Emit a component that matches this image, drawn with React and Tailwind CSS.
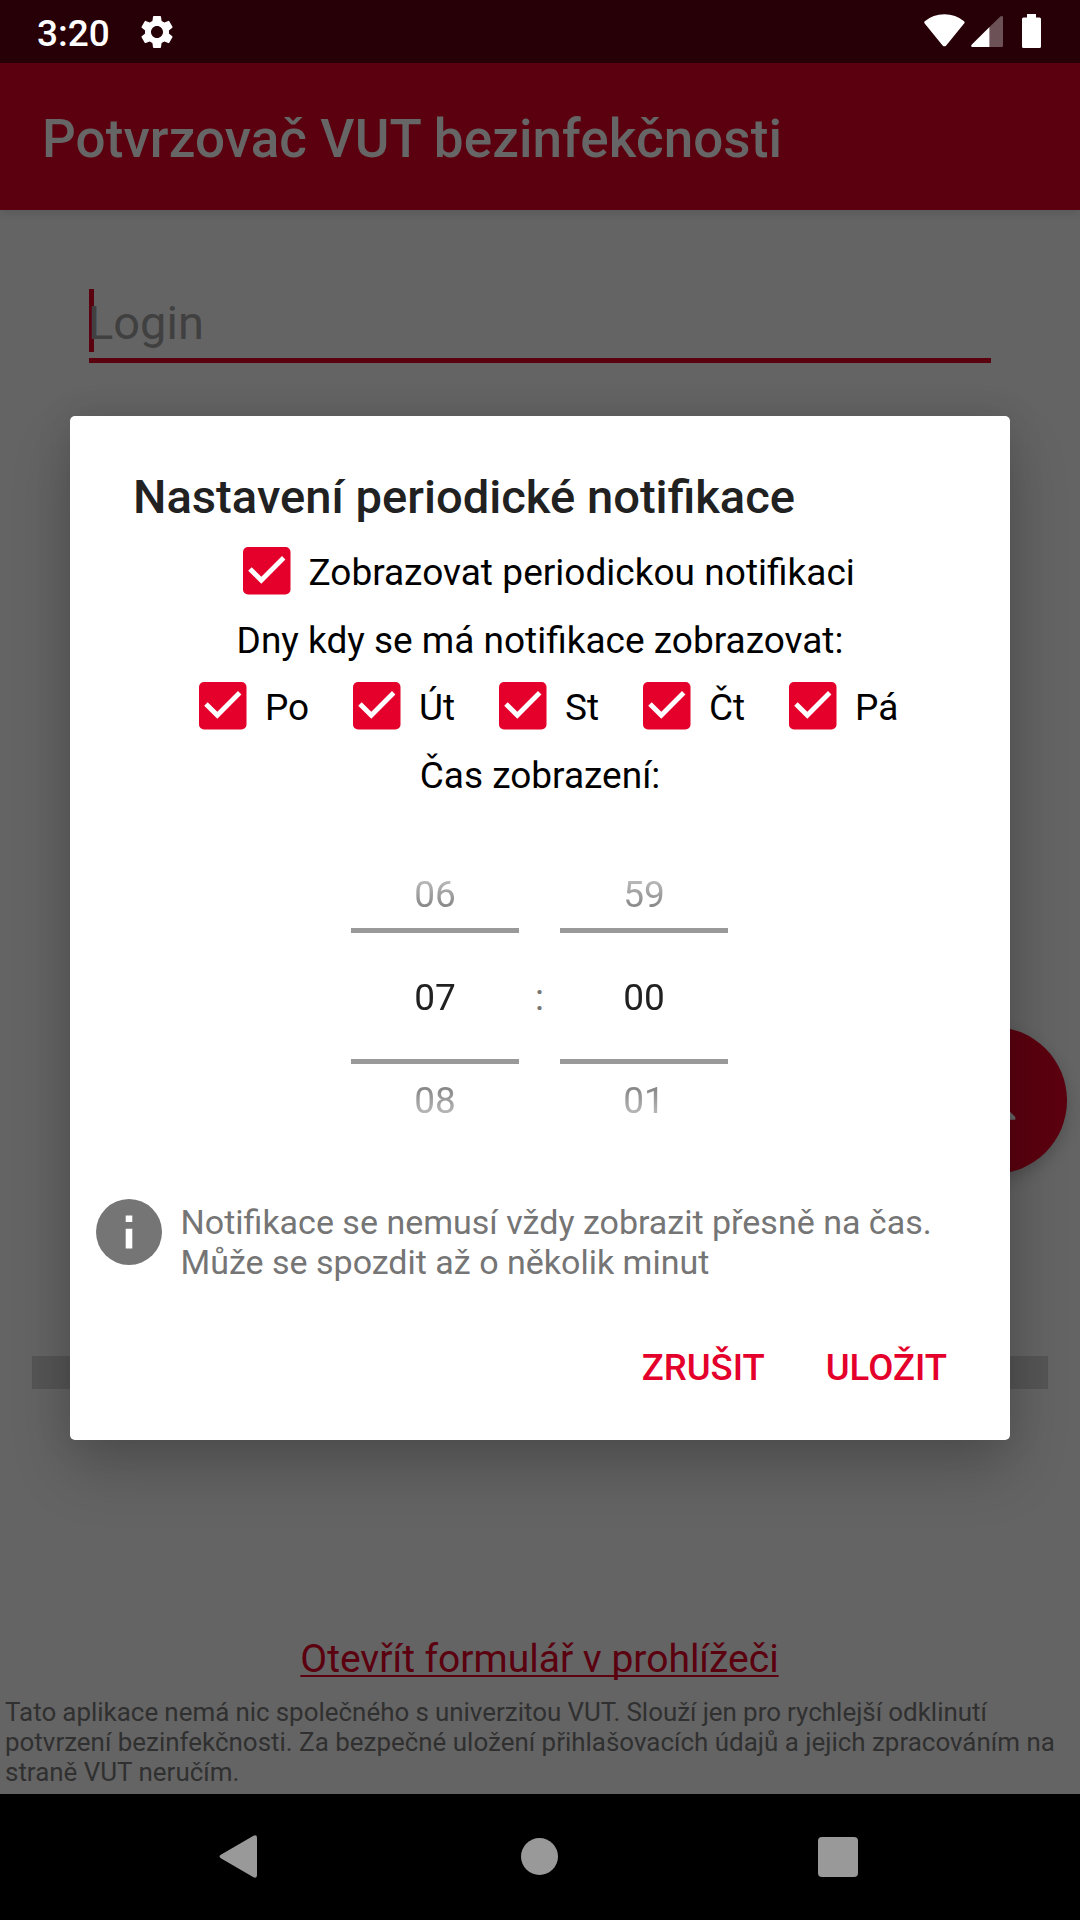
import { MdSettings } from 'react-icons/md';

const days = [
  { label: 'Po', width: 'w-[154px]' },
  { label: 'Út', width: 'w-[146px]' },
  { label: 'St', width: 'w-[144px]' },
  { label: 'Čt', width: 'w-[146px]' },
  { label: 'Pá', width: 'w-[130px]' },
];

function StatusBar() {
  return (
    <header className="flex h-[63px] items-start bg-[#270007] pl-[37px] text-white">
      <span className="mt-[11px] text-[37px] leading-[45px] font-medium">3:20</span>
      <MdSettings className="mt-[12px] ml-[27px] size-[40px]" />
      <svg className="mt-[14px] mr-[6px] ml-auto h-[33px] w-[41px]" viewBox="0 0 41 33" fill="currentColor">
        <path d="M.8 7.2Q9 .2 20.4.2T40 7.2q1 1 .3 2.1L22.2 31.4q-1.800 1.800-3.600 0L.5 9.300q-.6-1.100.3-2.100Z" />
      </svg>
      <svg className="mt-[16px] mr-[19px] h-[31px] w-[32px]" viewBox="0 0 32 31" fill="currentColor">
        <path d="M18.500 11v20H1.200q-1.600-.6-.6-2.200Z" />
        <path d="M18.500 11 29.300.5Q32-.6 32 1.500v28q0 1.500-1.500 1.500h-12Z" opacity=".32" />
      </svg>
      <svg className="mt-[14px] mr-[39px] h-[34px] w-[19px]" viewBox="0 0 19 34" fill="currentColor">
        <path d="M5 0h9v3.500h3.500q1.500 0 1.500 1.500v27.500q0 1.500-1.500 1.500h-16Q0 34 0 32.500V5q0-1.500 1.500-1.500H5Z" />
      </svg>
    </header>
  );
}

function Check() {
  return (
    <svg className="size-[47.5px] shrink-0" viewBox="0 0 47.5 47.5">
      <rect width="47.5" height="47.5" rx="5" fill="#e4002b" />
      <path d="M8.700 20.200 18.300 29.800 39 9.100 42.400 12.500 18.300 36.800 5.200 23.800Z" fill="#fff" />
    </svg>
  );
}

function Wheel({ values }) {
  return (
    <div className="relative w-[168px]">
      <div className="text-center text-[37px] leading-[103px] text-[#212121] [mask-image:linear-gradient(to_bottom,transparent_1px,black_118px,black_191px,transparent_308px)]">
        {values.map((v) => (
          <div key={v}>{v}</div>
        ))}
      </div>
      <div className="absolute inset-x-0 top-[85px] h-[5px] bg-[#999]" />
      <div className="absolute inset-x-0 top-[216px] h-[5px] bg-[#999]" />
    </div>
  );
}

function Dialog() {
  return (
    <section className="absolute top-[416px] left-[70px] h-[1024px] w-[940px] rounded-[5px] bg-white text-[37px] text-black shadow-[0_30px_60px_rgba(0,0,0,0.2),0_0_36px_rgba(0,0,0,0.1)]">
      <h2 className="pt-[52px] pl-[63px] text-[47.15px] leading-[58px] font-medium text-[#212121]">
        Nastavení periodické notifikace
      </h2>
      <label className="flex h-[90px] items-center gap-[18px] pl-[173px]">
        <Check />
        <span className="pt-[3px] [word-spacing:0.3px]">Zobrazovat periodickou notifikaci</span>
      </label>
      <p className="text-center leading-[49px]">Dny kdy se má notifikace zobrazovat:</p>
      <div className="flex h-[82px] items-center pl-[129px]">
        {days.map((d) => (
          <label key={d.label} className={`flex items-center gap-[18.5px] ${d.width}`}>
            <Check />
            <span className="pt-[3px]">{d.label}</span>
          </label>
        ))}
      </div>
      <p className="pt-px text-center leading-[56px]">Čas zobrazení:</p>
      <div className="mt-[39px] ml-[281px] flex">
        <Wheel values={['06', '07', '08']} />
        <span className="w-[41px] text-center leading-[309px] text-[#757575]">:</span>
        <Wheel values={['59', '00', '01']} />
      </div>
      <div className="mt-[47px] flex items-start pl-[25.5px] text-[#757575]">
        <svg className="size-[66px] shrink-0" viewBox="0 0 66 66">
          <circle cx="33" cy="33" r="33" fill="#757575" />
          <path d="M29.700 16.500h6.600v6.600h-6.600ZM29.700 29.700h6.600v19.800h-6.600Z" fill="#fff" />
        </svg>
        <p className="mt-[3px] ml-[19px] text-[34px] leading-[40px]">
          Notifikace se nemusí vždy zobrazit přesně na čas.
          <br />
          Může se spozdit až o několik minut
        </p>
      </div>
      <div className="mt-[63px] flex justify-end gap-[61px] pr-[63px] text-[36.5px] leading-[46px] font-medium text-[#e4002b]">
        <button>ZRUŠIT</button>
        <button>ULOŽIT</button>
      </div>
    </section>
  );
}

function NavBar() {
  return (
    <nav className="flex h-[126px] items-center bg-black pb-px pl-[219px] text-[#999]">
      <svg className="h-[43px] w-[38px]" viewBox="0 0 38 43" fill="currentColor">
        <path d="M1.800 19.800 34.500.7Q38-.5 38 2.700v37.600q0 3.200-3.500 2L1.800 23.200q-2.600-1.700 0-3.400Z" />
      </svg>
      <div className="ml-[264px] size-[37px] rounded-full bg-[#999]" />
      <div className="ml-[260px] size-[40px] rounded-[4px] bg-[#999]" />
    </nav>
  );
}

export default function App() {
  return (
    <div className="relative flex h-[1920px] w-[1080px] flex-col overflow-hidden bg-[#646464] font-['Roboto',sans-serif]">
      <StatusBar />
      <div className="h-[147px] shrink-0 bg-[#5b000f] pl-[42px] text-[53px] leading-[153px] font-medium tracking-[0.08px] text-[#666] shadow-[0_3px_8px_rgba(0,0,0,0.12)]">
        Potvrzovač VUT bezinfekčnosti
      </div>
      <main className="flex flex-1 flex-col">
        <div className="relative mx-[89px] mt-[79px] flex h-[74px] items-center border-b-5 border-[#5b000f] text-[47px] text-[#404040]">
          <div className="absolute top-0 left-0 h-[63px] w-[5px] bg-[#5b000f]" />
          <span className="relative -ml-px">Login</span>
        </div>
        <div className="mt-[664px] mr-[13px] flex size-[147px] items-center justify-center self-end rounded-full bg-[#5b000f] shadow-[0_6px_16px_rgba(0,0,0,0.2)]">
          <svg className="size-[64px]" viewBox="0 0 24 24" fill="#666">
            <path d="M12 22c1.100 0 2-.9 2-2h-4c0 1.100.9 2 2 2Zm6-6v-5c0-3.100-1.600-5.600-4.500-6.300V4a1.500 1.500 0 0 0-3 0v.7C7.600 5.400 6 7.900 6 11v5l-2 2v1h16v-1Z" />
          </svg>
        </div>
        <div className="mx-[32px] mt-[182px] h-[33px] bg-[#555]" />
        <a className="mt-[247px] pr-px text-center text-[39px] leading-[46px] text-[#5b000f] underline decoration-2 underline-offset-[3px] [text-decoration-skip-ink:none]">
          Otevřít formulář v prohlížeči
        </a>
        <p className="mt-[15px] pl-[5px] text-[25.95px] leading-[30px] whitespace-nowrap text-[#303030]">
          <span className="[word-spacing:-0.3px]">
            Tato aplikace nemá nic společného s univerzitou VUT. Slouží jen pro rychlejší odklinutí
          </span>
          <br />
          potvrzení bezinfekčnosti. Za bezpečné uložení přihlašovacích údajů a jejich zpracováním na
          <br />
          straně VUT neručím.
        </p>
      </main>
      <NavBar />
      <Dialog />
    </div>
  );
}
